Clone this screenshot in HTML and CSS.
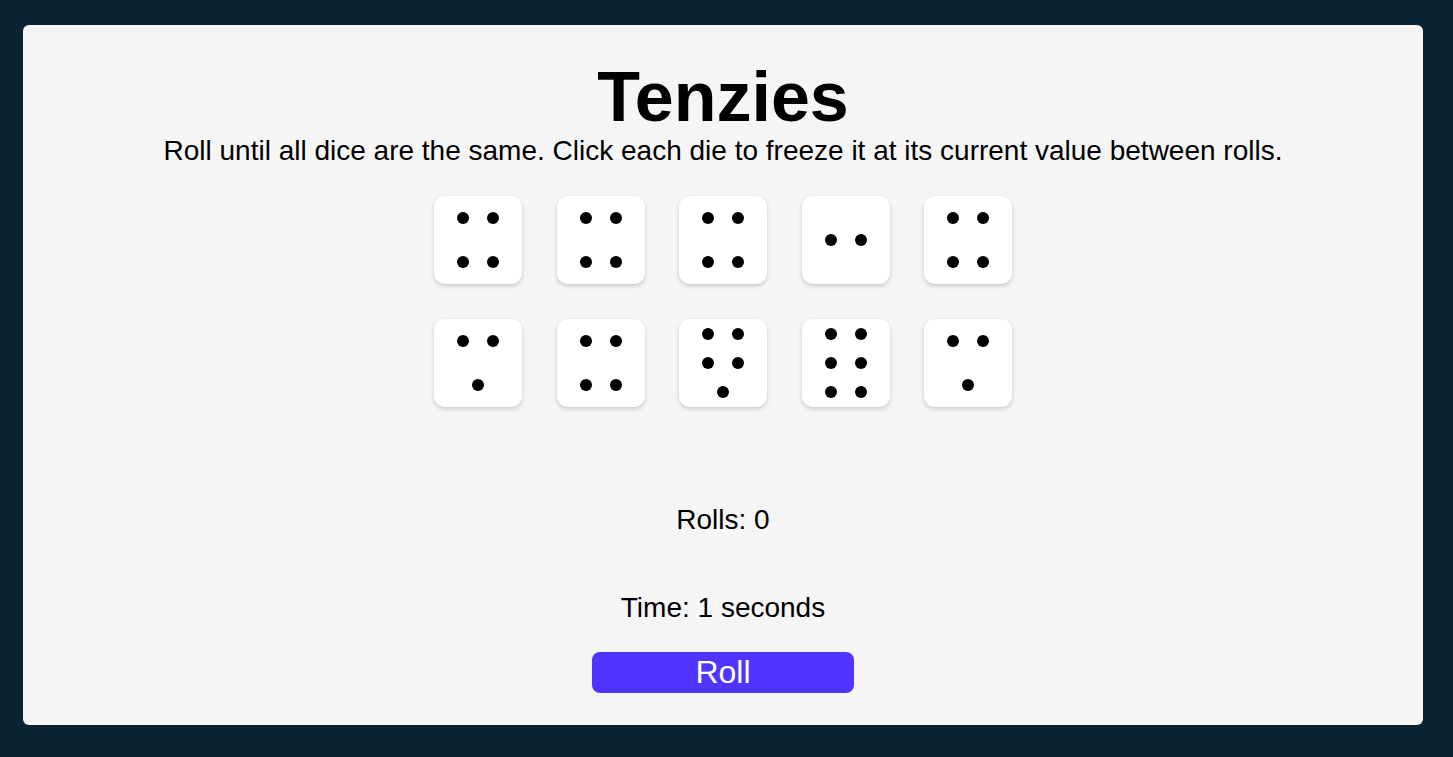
FILE: index.html
```html
<!DOCTYPE html>
<html lang="en">
<head>
<meta charset="utf-8">
<title>Tenzies</title>
<link rel="stylesheet" href="styles.css">
</head>
<body>
<main class="card">
  <h1 class="title">Tenzies</h1>
  <p class="instructions">Roll until all dice are the same. Click each die to freeze it at its current value between rolls.</p>
  <div class="dice">
    <div class="die"><span class="pip"></span><span class="pip"></span><span class="pip"></span><span class="pip"></span></div>
    <div class="die"><span class="pip"></span><span class="pip"></span><span class="pip"></span><span class="pip"></span></div>
    <div class="die"><span class="pip"></span><span class="pip"></span><span class="pip"></span><span class="pip"></span></div>
    <div class="die"><span class="pip"></span><span class="pip"></span></div>
    <div class="die"><span class="pip"></span><span class="pip"></span><span class="pip"></span><span class="pip"></span></div>
    <div class="die"><span class="pip"></span><span class="pip"></span><span class="pip"></span></div>
    <div class="die"><span class="pip"></span><span class="pip"></span><span class="pip"></span><span class="pip"></span></div>
    <div class="die"><span class="pip"></span><span class="pip"></span><span class="pip"></span><span class="pip"></span><span class="pip"></span></div>
    <div class="die"><span class="pip"></span><span class="pip"></span><span class="pip"></span><span class="pip"></span><span class="pip"></span><span class="pip"></span></div>
    <div class="die"><span class="pip"></span><span class="pip"></span><span class="pip"></span></div>
  </div>
  <p class="stat stat-rolls">Rolls: 0</p>
  <p class="stat stat-time">Time: 1 seconds</p>
  <button class="roll-btn" type="button">Roll</button>
</main>
</body>
</html>
```
FILE: styles.css
```css
* {
  box-sizing: border-box;
}

html, body {
  margin: 0;
  padding: 0;
}

body {
  background: #0b2434;
  font-family: "Liberation Sans", Arial, sans-serif;
  color: #000;
  padding: 25px 0 0 23px;
  height: 757px;
  overflow: hidden;
}

.card {
  width: 1400px;
  height: 700px;
  background: #f5f5f5;
  border-radius: 6px;
  display: flex;
  flex-direction: column;
  align-items: center;
  padding-top: 37px;
}

.title {
  margin: 0;
  font-size: 70px;
  font-weight: 700;
  line-height: 70px;
}

.instructions {
  margin: 5px 0 0;
  font-size: 28px;
  line-height: 28px;
}

.dice {
  margin-top: 31px;
  display: grid;
  grid-template-columns: repeat(5, 88px);
  grid-auto-rows: 88px;
  gap: 35px 34.5px;
}

.die {
  background: #fff;
  border-radius: 11px;
  box-shadow: 0 2px 4px rgba(0, 0, 0, 0.18);
  display: flex;
  flex-wrap: wrap;
  justify-content: center;
  align-content: space-around;
  padding: 0 14px;
}

.pip {
  width: 12px;
  height: 12px;
  margin: 0 9px;
  border-radius: 50%;
  background: #000;
}

.stat {
  margin: 0;
  font-size: 28px;
  line-height: 28px;
}

.stat-rolls {
  margin-top: 99px;
}

.stat-time {
  margin-top: 60px;
}

.roll-btn {
  margin-top: 30px;
  width: 262px;
  height: 41px;
  padding: 0;
  border: none;
  border-radius: 8px;
  background: #5035ff;
  color: #fff;
  font-family: "Liberation Sans", Arial, sans-serif;
  font-size: 32px;
  line-height: 41px;
  cursor: pointer;
}
```
